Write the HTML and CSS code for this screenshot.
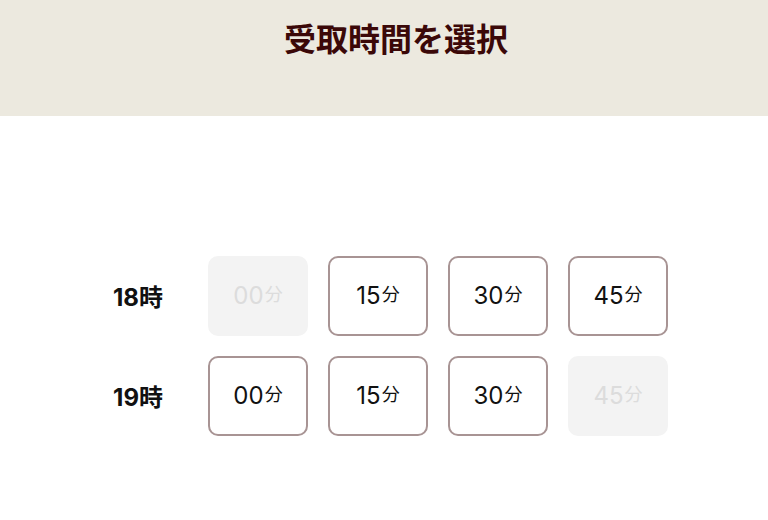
FILE: index.html
```html
<!DOCTYPE html>
<html lang="ja">

<head>
  <meta charset="UTF-8">
  <meta name="viewport" content="width=device-width, initial-scale=1.0">
  <title>受取時間を選択</title>
  <link rel="stylesheet" href="styles.css">
</head>

<body>
  <div class="header">
    <h1>受取時間を選択</h1>
  </div>
  <div class="slots">
    <div class="hour">18時</div>
    <button class="slot" disabled>00<span>分</span></button>
    <button class="slot">15<span>分</span></button>
    <button class="slot">30<span>分</span></button>
    <button class="slot">45<span>分</span></button>

    <div class="hour">19時</div>
    <button class="slot">00<span>分</span></button>
    <button class="slot">15<span>分</span></button>
    <button class="slot">30<span>分</span></button>
    <button class="slot" disabled>45<span>分</span></button>
  </div>
</body>

</html>
```

FILE: styles.css
```css
:root {
  --header-background-color: #ece9df;
  --header-text-color: #3b0808;
  --slot-border-color: #a89494;
  --slot-disabled-background: #f3f3f3;
  --slot-disabled-text: #dcdcdc;
  --text-color: #111111;
}

* {
  font-family: "Inter", "Noto Sans CJK JP", sans-serif;
  box-sizing: border-box;
}

body {
  margin: 0;
  padding: 0;
  background-color: #ffffff;
  color: var(--text-color);
}

.header {
  background-color: var(--header-background-color);
  height: 116px;
  padding-top: 16px;
  padding-left: 24px;
  text-align: center;
}

.header h1 {
  margin: 0;
  font-size: 32px;
  line-height: 48px;
  font-weight: 700;
  color: var(--header-text-color);
}

.slots {
  display: grid;
  grid-template-columns: repeat(5, 100px);
  grid-auto-rows: 80px;
  gap: 20px;
  justify-content: center;
  padding-right: 12px;
  margin-top: 140px;
}

.hour {
  display: flex;
  align-items: center;
  justify-content: center;
  font-size: 24px;
  font-weight: 700;
  padding-bottom: 2px;
}

.slot {
  display: flex;
  align-items: center;
  justify-content: center;
  background-color: #ffffff;
  border: 2px solid var(--slot-border-color);
  border-radius: 10px;
  font-size: 24px;
  color: var(--text-color);
  cursor: pointer;
  padding: 0 0 2px;
}

.slot span {
  font-size: 18px;
  margin-left: 1px;
  position: relative;
  top: -2px;
}

.slot:disabled {
  background-color: var(--slot-disabled-background);
  border-color: var(--slot-disabled-background);
  color: var(--slot-disabled-text);
  cursor: default;
}
```
